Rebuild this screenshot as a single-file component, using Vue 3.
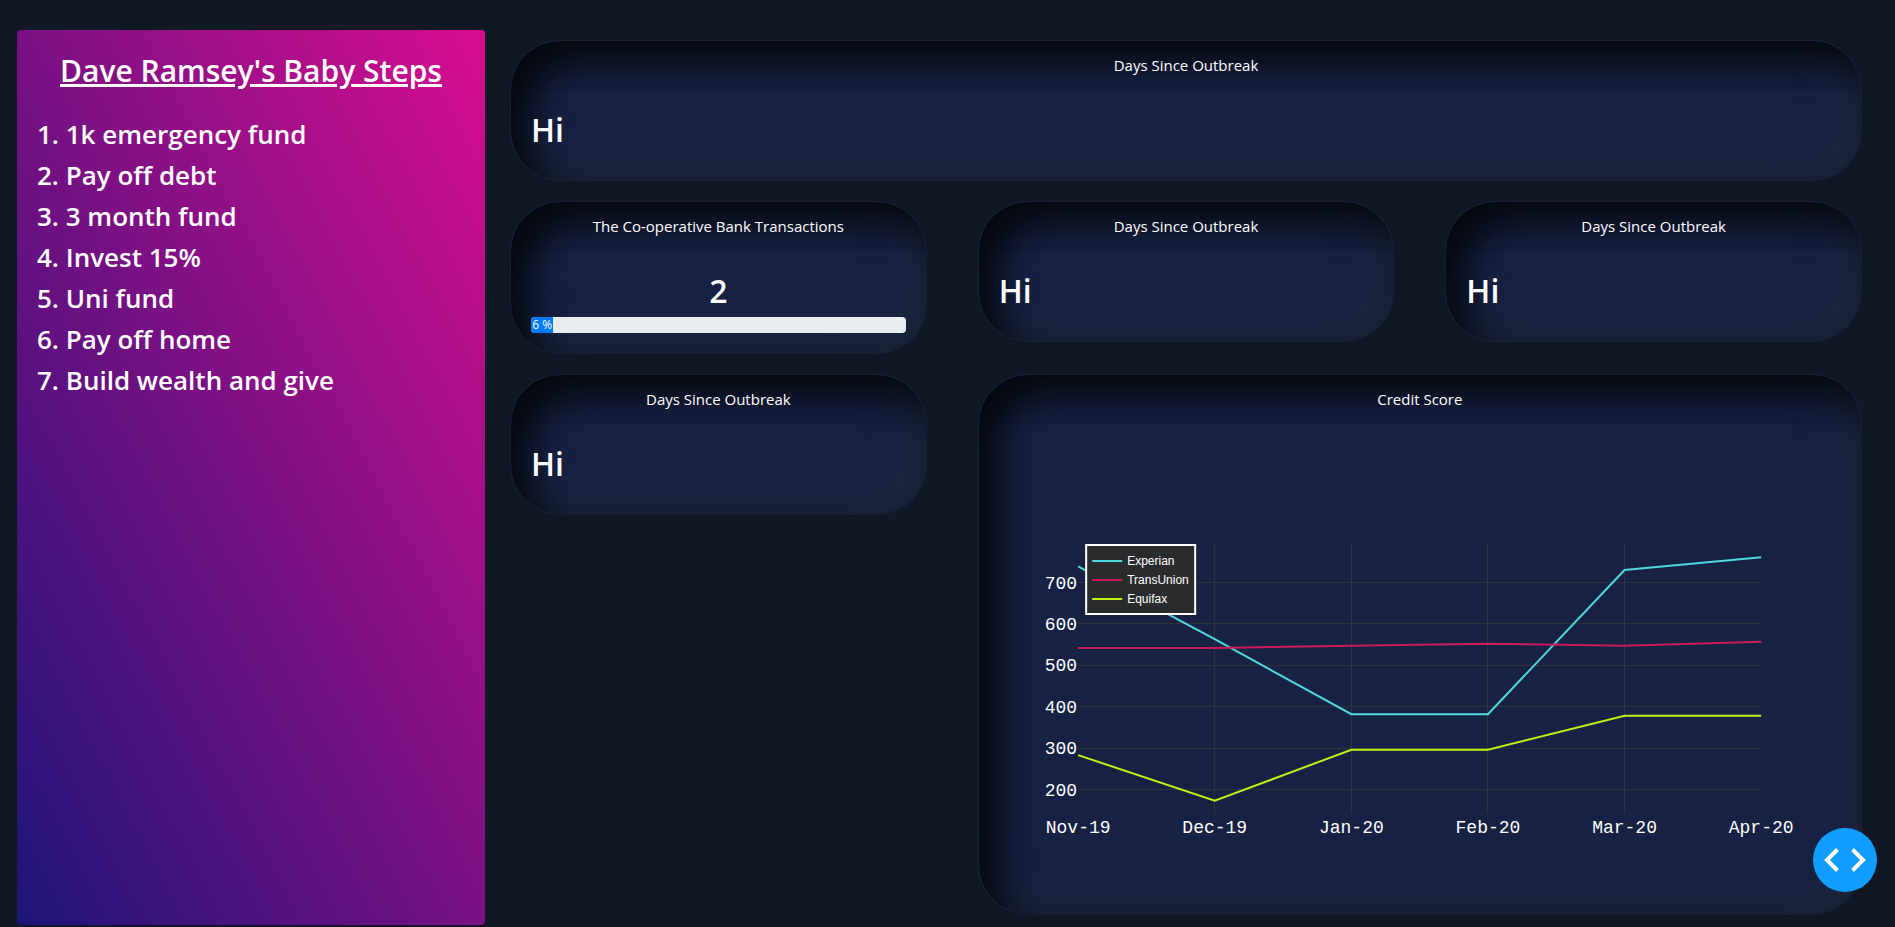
<script setup>
const steps = [
  '1k emergency fund',
  'Pay off debt',
  '3 month fund',
  'Invest 15%',
  'Uni fund',
  'Pay off home',
  'Build wealth and give'
]

const progress = 6

const months = ['Nov-19', 'Dec-19', 'Jan-20', 'Feb-20', 'Mar-20', 'Apr-20']
const ticks = [200, 300, 400, 500, 600, 700]
const series = [
  { name: 'Experian', color: '#4fd8e0', values: [739, 563, 382, 382, 730, 761] },
  { name: 'TransUnion', color: '#cc1a5c', values: [542, 542, 547, 552, 547, 557] },
  { name: 'Equifax', color: '#bff012', values: [283, 173, 296, 296, 378, 378] }
]

const plot = { left: 79, right: 762, top: 100, bottom: 370 }
const xOf = (i) => plot.left + (i * (plot.right - plot.left)) / (months.length - 1)
const yOf = (v) => 138.5 + (700 - v) * 0.414
const points = (values) => values.map((v, i) => `${xOf(i)},${yOf(v)}`).join(' ')
</script>

<template>
  <div class="page">
    <aside class="steps">
      <h2 class="steps-title">Dave Ramsey's Baby Steps</h2>
      <ol class="steps-list">
        <li v-for="(step, i) in steps" :key="step">{{ i + 1 }}. {{ step }}</li>
      </ol>
    </aside>

    <main class="board">
      <section class="card full">
        <header class="card-header">Days Since Outbreak</header>
        <div class="card-body"><h2 class="value">Hi</h2></div>
      </section>

      <section class="card">
        <header id="bank-title" class="card-header">The Co-operative Bank Transactions</header>
        <div class="card-body">
          <h2 class="value centered">2</h2>
          <div
            class="progress"
            role="progressbar"
            aria-labelledby="bank-title"
            :aria-valuenow="progress"
            aria-valuemin="0"
            aria-valuemax="100"
          >
            <div class="progress-bar" :style="{ width: progress + '%' }">{{ progress }} %</div>
          </div>
        </div>
      </section>
      <section v-for="n in 2" :key="n" class="card">
        <header class="card-header">Days Since Outbreak</header>
        <div class="card-body"><h2 class="value">Hi</h2></div>
      </section>

      <section class="card">
        <header class="card-header">Days Since Outbreak</header>
        <div class="card-body"><h2 class="value">Hi</h2></div>
      </section>
      <section class="card wide">
        <header class="card-header">Credit Score</header>
        <div class="card-body">
          <svg class="chart" viewBox="0 0 842 450" role="img" aria-label="Credit Score">
            <g class="grid" shape-rendering="crispEdges">
              <line v-for="t in ticks" :key="t" :x1="plot.left" :x2="plot.right" :y1="yOf(t)" :y2="yOf(t)" />
              <line v-for="i in 4" :key="'v' + i" :x1="xOf(i)" :x2="xOf(i)" :y1="plot.top" :y2="plot.bottom" />
            </g>
            <polyline
              v-for="s in series"
              :key="s.name"
              class="trace"
              :stroke="s.color"
              :points="points(s.values)"
            />
            <g class="tick">
              <text v-for="t in ticks" :key="t" text-anchor="end" :x="plot.left - 1" :y="yOf(t) + 6">{{ t }}</text>
              <text v-for="(m, i) in months" :key="m" text-anchor="middle" :x="xOf(i)" y="389">{{ m }}</text>
            </g>
            <g class="legend">
              <rect class="legend-box" x="87" y="101" width="109" height="69" />
              <g v-for="(s, i) in series" :key="s.name">
                <line class="trace" :stroke="s.color" x1="93" x2="123" :y1="117 + i * 19" :y2="117 + i * 19" />
                <text x="128" :y="121 + i * 19">{{ s.name }}</text>
              </g>
            </g>
          </svg>
        </div>
      </section>
    </main>

    <button class="debug" type="button" aria-label="Toggle developer tools">
      <svg viewBox="0 0 64 64" aria-hidden="true">
        <path d="M24.500 21.500 L14 32 L24.500 42.500 M39.500 21.500 L50 32 L39.500 42.500" />
      </svg>
    </button>
  </div>
</template>

<style>
body {
  margin: 0;
  background: #101725;
}
</style>

<style scoped>
.page {
  box-sizing: border-box;
  min-height: 100vh;
  display: grid;
  grid-template-columns: 468fr 1352fr;
  column-gap: 25px;
  padding: 30px 33px 2px 17px;
  background: #101725;
  color: #fff;
  font-family: "Segoe UI", "Open Sans", "Noto Sans", sans-serif;
  font-size: 15px;
  line-height: 24px;
}

.steps {
  box-sizing: border-box;
  padding: 20px;
  border-radius: 4px;
  background: linear-gradient(to top right, #1c1478, #d80d8f);
}

.steps-title {
  margin: 0;
  font-size: 30px;
  font-weight: 600;
  line-height: 42px;
  text-align: center;
  text-decoration: underline;
  text-decoration-thickness: 3px;
}

.steps-list {
  margin: 22px 0 0;
  padding: 0;
  list-style: none;
  font-size: 26px;
  font-weight: 600;
  line-height: 41px;
}

.board {
  display: grid;
  grid-template-columns: repeat(3, 1fr);
  gap: 20px 51px;
  align-items: start;
  align-content: start;
  padding-top: 10px;
}

.card {
  box-sizing: border-box;
  min-width: 0;
  min-height: 141px;
  border: 1px solid #182133;
  border-radius: 50px;
  overflow: hidden;
  background: #172143;
  box-shadow: inset 20px 20px 34px #06090f, inset -20px -20px 40px #1b253b;
}

.full {
  grid-column: 1 / -1;
}

.wide {
  grid-column: span 2;
}

.card-header {
  padding: 12px 20px 13px;
  background: rgba(0, 0, 0, 0.05);
  text-align: center;
}

.card-body {
  padding: 20px;
}

.value {
  margin: 0 0 6px;
  font-size: 32px;
  font-weight: 600;
  line-height: 40px;
}

.centered {
  text-align: center;
}

.progress {
  height: 16px;
  overflow: hidden;
  border-radius: 4px;
  background: #e9ecef;
}

.progress-bar {
  height: 16px;
  background: #007bff;
  font-size: 12px;
  line-height: 16px;
  text-align: center;
  white-space: nowrap;
}

.chart {
  display: block;
  width: 100%;
  height: 450px;
}

.grid line {
  stroke: #30313b;
  stroke-width: 1;
}

.trace {
  fill: none;
  stroke-width: 2;
}

.tick text {
  fill: #fff;
  font-family: "Courier New", "Liberation Mono", monospace;
  font-size: 18px;
}

.legend text {
  fill: #fff;
  font-family: "Liberation Sans", Arial, sans-serif;
  font-size: 12px;
}

.legend-box {
  fill: #292b2c;
  stroke: #fff;
  stroke-width: 2;
}

.debug {
  position: fixed;
  right: 18px;
  bottom: 35px;
  width: 64px;
  height: 64px;
  padding: 0;
  border: 0;
  border-radius: 50%;
  background: #119dff;
  cursor: pointer;
}

.debug svg {
  display: block;
  width: 64px;
  height: 64px;
}

.debug path {
  fill: none;
  stroke: #fff;
  stroke-width: 4;
}
</style>
